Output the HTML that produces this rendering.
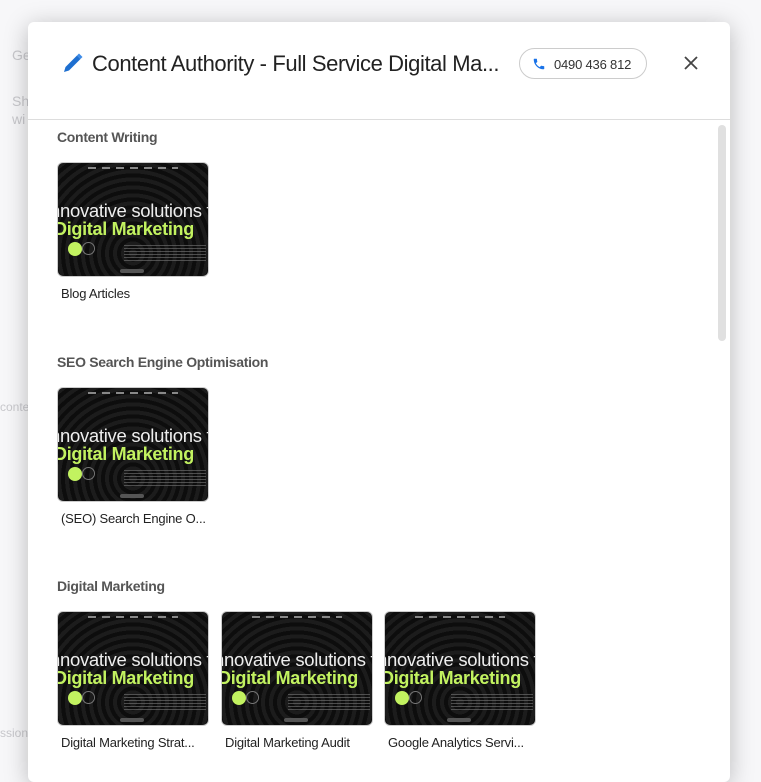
<!DOCTYPE html>
<html><head><style>
*{box-sizing:border-box;margin:0;padding:0}
body{width:761px;height:770px;overflow:hidden;background:#f7f7f9;font-family:"Liberation Sans",sans-serif;position:relative}
.bg{position:absolute;color:#c8c8cc;font-size:14px}
.modal{position:absolute;left:28px;top:22px;width:702px;height:760px;background:#fff;border-radius:6px;box-shadow:0 4px 24px rgba(0,0,0,.25)}
.hdr{height:98px;border-bottom:1px solid #ddd;position:relative}
.title{position:absolute;left:64px;top:29px;font-size:22px;color:#222;letter-spacing:-0.4px}
.pen{position:absolute;left:33px;top:29px}
.phone{position:absolute;left:491px;top:26px;width:128px;height:31px;border:1px solid #ccc;border-radius:16px;font-size:13px;color:#333;padding:8px 0 0 34px;letter-spacing:-0.2px}
.phone svg{position:absolute;left:12px;top:8px}
.x{position:absolute;left:654px;top:32px}
.sec{position:absolute;left:29px;font-size:14px;font-weight:bold;color:#555;letter-spacing:-0.3px}
.card{position:absolute;width:152px}
.th{width:152px;height:115px;border-radius:6px;background:#141414 repeating-radial-gradient(circle at 50% 80%,#1c1c1c 0 4px,#0d0d0d 4px 8px);position:relative;overflow:hidden;border:1px solid #ccc}
.t1{position:absolute;left:-8px;top:37px;color:#eee;font-size:18.5px;white-space:nowrap;letter-spacing:-0.3px}
.t2{position:absolute;left:-4px;top:56px;color:#c2f260;font-size:18px;font-weight:bold;white-space:nowrap;letter-spacing:-0.3px}
.dot{position:absolute;left:10px;top:79px;width:14px;height:14px;border-radius:50%;background:#c2f260}
.dot2{position:absolute;left:24px;top:79px;width:13px;height:13px;border-radius:50%;border:1px solid #777}
.lines{position:absolute;left:66px;top:82px;width:82px;height:18px;background:repeating-linear-gradient(#777 0 1px,transparent 1px 3px);opacity:.6}
.btn{position:absolute;left:62px;top:106px;width:24px;height:4px;background:#555;border-radius:2px}
.nav{position:absolute;left:30px;top:4px;width:90px;height:2px;background:repeating-linear-gradient(90deg,#888 0 8px,transparent 8px 14px)}
.lbl{font-size:13px;color:#222;margin:9px 0 0 4px;white-space:nowrap;letter-spacing:-0.2px}
.sb{position:absolute;left:690px;top:103px;width:8px;height:216px;background:#e0e0e0;border-radius:4px}
</style></head><body>
<div class="bg" style="left:12px;top:47px">Ge</div>
<div class="bg" style="left:12px;top:93px">Sh</div>
<div class="bg" style="left:12px;top:111px">wi</div>
<div class="bg" style="left:0;top:400px;font-size:12px">conte</div>
<div class="bg" style="left:0;top:726px;font-size:12px">ssion</div>
<div class="modal">
 <div class="hdr">
  <svg class="pen" width="24" height="24" viewBox="0 0 24 24"><path d="M3 21l1.5-5L16 4.5l3.5 3.5L8 19.5z" fill="#1e6fd0"/><path d="M16 4.5l2-2 3.5 3.5-2 2z" fill="#3d8be8"/></svg>
  <div class="title">Content Authority - Full Service Digital Ma...</div>
  <div class="phone"><svg width="14" height="14" viewBox="0 0 24 24"><path d="M6.6 10.8c1.4 2.8 3.8 5.1 6.6 6.6l2.2-2.2c.3-.3.7-.4 1-.2 1.1.4 2.3.6 3.6.6.6 0 1 .4 1 1V20c0 .6-.4 1-1 1C10.6 21 3 13.4 3 4c0-.6.4-1 1-1h3.5c.6 0 1 .4 1 1 0 1.3.2 2.5.6 3.6.1.3 0 .7-.2 1z" fill="#1a73e8"/></svg>0490 436 812</div>
  <svg class="x" width="18" height="18" viewBox="0 0 18 18"><path d="M3 3l12 12M15 3L3 15" stroke="#444" stroke-width="1.8"/></svg>
 </div>
 <div class="sb"></div>
 <div class="sec" style="top:107px">Content Writing</div>
 <div class="sec" style="top:332px">SEO Search Engine Optimisation</div>
 <div class="sec" style="top:556px">Digital Marketing</div>
 <div class="card" style="left:29px;top:140px"><div class="th"><div class="nav"></div><div class="t1">nnovative solutions fo</div><div class="t2">Digital Marketing</div><div class="dot"></div><div class="dot2"></div><div class="lines"></div><div class="btn"></div></div><div class="lbl">Blog Articles</div></div>
 <div class="card" style="left:29px;top:365px"><div class="th"><div class="nav"></div><div class="t1">nnovative solutions fo</div><div class="t2">Digital Marketing</div><div class="dot"></div><div class="dot2"></div><div class="lines"></div><div class="btn"></div></div><div class="lbl">(SEO) Search Engine O...</div></div>
 <div class="card" style="left:29px;top:589px"><div class="th"><div class="nav"></div><div class="t1">nnovative solutions fo</div><div class="t2">Digital Marketing</div><div class="dot"></div><div class="dot2"></div><div class="lines"></div><div class="btn"></div></div><div class="lbl">Digital Marketing Strat...</div></div>
 <div class="card" style="left:193px;top:589px"><div class="th"><div class="nav"></div><div class="t1">nnovative solutions fo</div><div class="t2">Digital Marketing</div><div class="dot"></div><div class="dot2"></div><div class="lines"></div><div class="btn"></div></div><div class="lbl">Digital Marketing Audit</div></div>
 <div class="card" style="left:356px;top:589px"><div class="th"><div class="nav"></div><div class="t1">nnovative solutions fo</div><div class="t2">Digital Marketing</div><div class="dot"></div><div class="dot2"></div><div class="lines"></div><div class="btn"></div></div><div class="lbl">Google Analytics Servi...</div></div>
</div>
</body></html>
